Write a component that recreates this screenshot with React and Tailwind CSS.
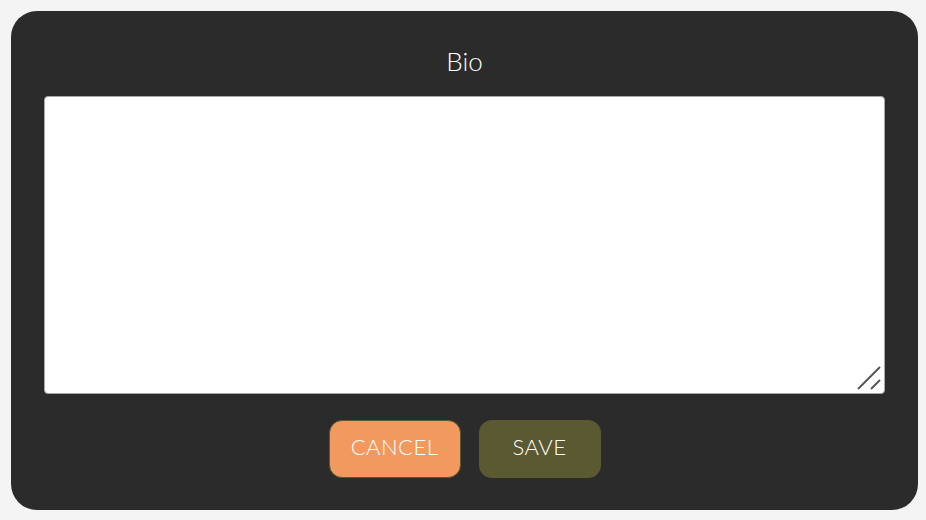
export default function App() {
  return (
    <div className="w-[926px] h-[520px] bg-[#f4f4f4] pt-[11px] pl-[11px]" style={{ fontFamily: '"Lato", "Noto Sans", sans-serif' }}>
      <div className="w-[907px] h-[499px] bg-[#2b2b2b] rounded-[26px] flex flex-col items-center px-[33px] pt-[33px]">
        <h2 className="text-white text-[26px] font-light leading-[34px] h-[34px]">Bio</h2>
        <div className="relative mt-[18px] shrink-0">
          <textarea className="w-[841px] h-[298px] bg-white border border-[#a8a8a8] rounded-[4px] outline-none block resize-none" />
          <svg className="absolute right-[3px] bottom-[3px] pointer-events-none" width="26" height="26" viewBox="0 0 26 26">
            <line x1="2" y1="24" x2="24" y2="2" stroke="#555" strokeWidth="2" />
            <line x1="15" y1="24" x2="24" y2="15" stroke="#555" strokeWidth="2" />
          </svg>
        </div>
        <div className="flex gap-[18px] mt-[26px]">
          <button className="w-[132px] h-[58px] pb-[5px] bg-[#f2995f] border border-[#5a5932] rounded-[13px] text-white text-[22px] font-light tracking-[0.5px]">CANCEL</button>
          <button className="w-[122px] h-[58px] pb-[5px] bg-[#5a5932] rounded-[13px] text-white text-[22px] font-light tracking-[0.5px]">SAVE</button>
        </div>
      </div>
    </div>
  );
}
